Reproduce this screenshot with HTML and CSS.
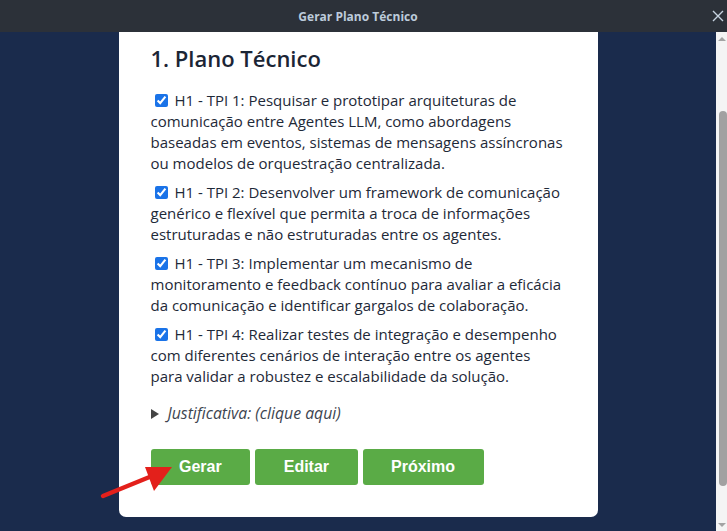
FILE: index.html
```html
<!DOCTYPE html>
<html lang="pt">
<head>
<meta charset="utf-8">
<title>Gerar Plano Técnico</title>
<link rel="stylesheet" href="styles.css">
</head>
<body>
<div class="window">
  <header class="titlebar">
    <span class="title">Gerar Plano Técnico</span>
    <svg class="close" width="12" height="12" viewBox="0 0 12 12"><path d="M1 1L11 11M11 1L1 11" stroke="#c6d3e0" stroke-width="1.4" fill="none"/></svg>
  </header>
  <div class="viewport">
    <div class="stage">
      <section class="card">
        <h2 class="heading">1. Plano Técnico</h2>
        <ul class="items">
          <li><label><input type="checkbox" checked> H1 - TPI 1: Pesquisar e prototipar arquiteturas de comunicação entre Agentes LLM, como abordagens baseadas em eventos, sistemas de mensagens assíncronas ou modelos de orquestração centralizada.</label></li>
          <li><label><input type="checkbox" checked> H1 - TPI 2: Desenvolver um framework de comunicação genérico e flexível que permita a troca de informações estruturadas e não estruturadas entre os agentes.</label></li>
          <li><label><input type="checkbox" checked> H1 - TPI 3: Implementar um mecanismo de monitoramento e feedback contínuo para avaliar a eficácia da comunicação e identificar gargalos de colaboração.</label></li>
          <li><label><input type="checkbox" checked> H1 - TPI 4: Realizar testes de integração e desempenho com diferentes cenários de interação entre os agentes para validar a robustez e escalabilidade da solução.</label></li>
        </ul>
        <div class="summary"><span class="tri"></span><em>Justificativa: (clique aqui)</em></div>
        <div class="actions">
          <button class="btn">Gerar</button>
          <button class="btn">Editar</button>
          <button class="btn">Próximo</button>
        </div>
      </section>
    </div>
    <div class="scrollbar">
      <span class="arrow-up"></span>
      <span class="thumb"></span>
      <span class="arrow-down"></span>
    </div>
  </div>
  <svg class="pointer" width="727" height="531" viewBox="0 0 727 531">
    <path d="M103 496L152 476" stroke="#e3201b" stroke-width="4.5" stroke-linecap="round" fill="none"/>
    <path d="M172 467L145 467L154 491Z" fill="#e3201b"/>
  </svg>
</div>
</body>
</html>
```
FILE: styles.css
```css
html, body {
  margin: 0;
  padding: 0;
  width: 727px;
  height: 531px;
  overflow: hidden;
  background: #1a2b4c;
}
.window {
  position: relative;
  width: 727px;
  height: 531px;
  display: flex;
  flex-direction: column;
}
.titlebar {
  height: 32px;
  background: #2c3139;
  display: flex;
  align-items: center;
  justify-content: center;
  padding-right: 11px;
  position: relative;
  flex: none;
}
.title {
  font-family: "Open Sans", sans-serif;
  font-weight: 700;
  font-size: 12px;
  color: #bccbdb;
  letter-spacing: 0;
}
.close {
  position: absolute;
  right: 3px;
  top: 10px;
}
.viewport {
  flex: 1;
  display: flex;
  overflow: hidden;
}
.stage {
  flex: 1;
  display: flex;
  justify-content: center;
  align-items: flex-start;
}
.card {
  width: 414px;
  background: #fff;
  padding: 10px 33px 32px 32px;
  border-radius: 0 0 7px 7px;
  font-family: "Open Sans", sans-serif;
  color: #1e2938;
}
.heading {
  margin: 0 0 16px;
  font-size: 22px;
  line-height: 32px;
  font-weight: 600;
  color: #1b2535;
}
.items {
  list-style: none;
  margin: 0;
  padding: 0;
  display: flex;
  flex-direction: column;
  gap: 8px;
}
.items li {
  font-size: 15px;
  line-height: 21px;
}
.items input {
  width: 13px;
  height: 13px;
  margin: 0 3px 0 4px;
  vertical-align: -1px;
  accent-color: #1a73e8;
}
.summary {
  margin-top: 16px;
  display: flex;
  align-items: center;
  gap: 9px;
  font-size: 15.8px;
  line-height: 21px;
  color: #3d4550;
}
.tri {
  width: 0;
  height: 0;
  border-left: 8px solid #444;
  border-top: 5px solid transparent;
  border-bottom: 5px solid transparent;
}
.actions {
  margin-top: 25px;
  display: flex;
  gap: 5px;
}
.btn {
  height: 36px;
  padding: 0 28.5px;
  border: none;
  border-radius: 3px;
  background: #5aab46;
  color: #fff;
  font-family: "Liberation Sans", Arial, sans-serif;
  font-weight: 700;
  font-size: 16px;
}
.scrollbar {
  width: 11px;
  background: #f4f4f4;
  position: relative;
  flex: none;
}
.arrow-up, .arrow-down {
  position: absolute;
  left: 2px;
  width: 0;
  height: 0;
  border-left: 4px solid transparent;
  border-right: 4px solid transparent;
}
.arrow-up {
  top: 5px;
  border-bottom: 4px solid #a3a3a3;
}
.arrow-down {
  bottom: 4px;
  border-top: 4px solid #a3a3a3;
}
.thumb {
  position: absolute;
  left: 3px;
  right: 0;
  top: 79px;
  height: 375px;
  background: #a1a1a1;
  border-radius: 4px;
}
.pointer {
  position: absolute;
  left: 0;
  top: 0;
  pointer-events: none;
}
```
